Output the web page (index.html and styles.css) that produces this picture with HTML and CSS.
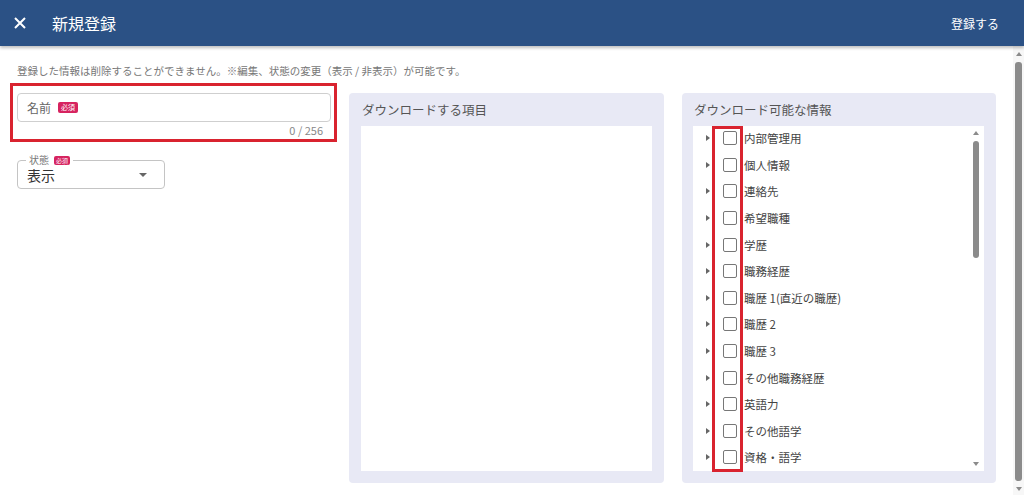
FILE: index.html
```html
<!DOCTYPE html>
<html lang="ja">
<head>
<meta charset="utf-8">
<title>新規登録</title>
<link rel="stylesheet" href="styles.css">
</head>
<body>
<div class="header">
	<svg class="close" width="12" height="12" viewBox="0 0 12 12"><path d="M1 1L11 11M11 1L1 11" stroke="#fff" stroke-width="2"/></svg>
	<span class="title">新規登録</span>
	<a class="submit">登録する</a>
</div>
<div class="page">
	<div class="main">
		<p class="notice">登録した情報は削除することができません。※編集、状態の変更（表示 / 非表示）が可能です。</p>
		<div class="content">
			<div class="form">
				<div class="mark">
					<div class="input">
						<span class="placeholder">名前</span><span class="must">必須</span>
					</div>
					<div class="count">0 / 256</div>
				</div>
				<fieldset class="select">
					<legend>状態<span class="must small">必須</span></legend>
					<span class="value">表示</span>
					<svg width="8" height="4" viewBox="0 0 8 4"><path d="M0 0H8L4 4Z" fill="#666"/></svg>
				</fieldset>
			</div>
			<div class="panel">
				<div class="panelTitle">ダウンロードする項目</div>
				<div class="box"></div>
			</div>
			<div class="panel right">
				<div class="panelTitle">ダウンロード可能な情報</div>
				<div class="box tree">
					<ul class="treeList">
						<li><i></i><b></b>内部管理用</li>
						<li><i></i><b></b>個人情報</li>
						<li><i></i><b></b>連絡先</li>
						<li><i></i><b></b>希望職種</li>
						<li><i></i><b></b>学歴</li>
						<li><i></i><b></b>職務経歴</li>
						<li><i></i><b></b>職歴 1(直近の職歴)</li>
						<li><i></i><b></b>職歴 2</li>
						<li><i></i><b></b>職歴 3</li>
						<li><i></i><b></b>その他職務経歴</li>
						<li><i></i><b></b>英語力</li>
						<li><i></i><b></b>その他語学</li>
						<li><i></i><b></b>資格・語学</li>
					</ul>
					<div class="bar small">
						<span class="up"></span>
						<span class="thumb"></span>
						<span class="down"></span>
					</div>
					<div class="checkMark"></div>
				</div>
			</div>
		</div>
	</div>
	<div class="bar page">
		<span class="up"></span>
		<span class="thumb"></span>
		<span class="down"></span>
	</div>
</div>
</body>
</html>
```
FILE: styles.css
```css
*{
	box-sizing:border-box;
}
body{
	margin:0;
	font-family:"Noto Sans CJK JP","Noto Sans",sans-serif;
	color:#444;
	background:#fff;
	overflow:hidden;
}
.header{
	height:46px;
	background-color:#2b5185;
	box-shadow:0 2px 3px rgba(0,0,0,0.25);
	display:flex;
	align-items:center;
	padding:0 25px 0 14px;
	color:#fff;
	position:relative;
	z-index:1;
}
.header .close{
	margin-right:26px;
}
.header .title{
	font-size:16px;
	flex:1;
}
.header .submit{
	font-size:12px;
}
.page{
	display:flex;
	height:449px;
}
.main{
	flex:1;
	padding:17px 17px 0 17px;
}
.notice{
	margin:0 0 4px 0;
	font-size:10.5px;
	line-height:16px;
	color:#777;
}
.content{
	display:flex;
	gap:18px;
}
.form{
	width:314px;
}
.mark{
	margin:0 -6px 0 -7px;
	border:3px solid #d9232f;
	padding:7px 3px 3px 4px;
}
.input{
	height:29px;
	border:1px solid #cfcfcf;
	border-radius:4px;
	display:flex;
	align-items:center;
	padding-left:9px;
}
.placeholder{
	font-size:12px;
	color:#666;
	margin-right:7px;
}
.must{
	display:inline-block;
	background-color:#d6235f;
	color:#fff;
	font-size:7px;
	line-height:11px;
	padding:0 3px;
	border-radius:2px;
}
.must.small{
	font-size:6px;
	line-height:9px;
	padding:0 2px;
	margin-left:5px;
	vertical-align:1px;
}
.count{
	text-align:right;
	font-size:11px;
	line-height:12px;
	margin-top:2px;
	padding-right:8px;
	color:#888;
}
.select{
	margin:12px 0 0 0;
	width:148px;
	height:35px;
	border:1px solid #c4c4c4;
	border-radius:4px;
	padding:0 17px 0 9px;
	display:flex;
	align-items:flex-start;
	justify-content:space-between;
}
.select legend{
	font-size:10px;
	line-height:12px;
	color:#777;
	padding:0 3px;
	margin-left:-1px;
}
.select .value{
	font-size:14px;
	line-height:18px;
	color:#333;
}
.select svg{
	margin-top:7px;
}
.panel{
	flex:1;
	margin-top:10px;
	height:390px;
	background-color:#e8e9f5;
	border-radius:4px;
	padding:0 12px 12px 12px;
	display:flex;
	flex-direction:column;
}
.panel.right{
	padding:0 12px 13px 11px;
}
.panelTitle{
	font-size:12.5px;
	line-height:33px;
	padding-left:1px;
	color:#555;
}
.box{
	flex:1;
	background:#fff;
}
.tree{
	display:flex;
	position:relative;
}
.treeList{
	flex:1;
	list-style:none;
	margin:-1px 0 0 0;
	padding:0 0 0 13px;
}
.treeList li{
	height:26.6px;
	display:flex;
	align-items:center;
	font-size:11.5px;
	color:#444;
}
.treeList i{
	width:0;
	height:0;
	border-left:4px solid #666;
	border-top:3px solid transparent;
	border-bottom:3px solid transparent;
	margin-right:13px;
}
.treeList b{
	width:14px;
	height:14px;
	border:1.5px solid #777;
	border-radius:2px;
	margin-right:7px;
}
.checkMark{
	position:absolute;
	left:19px;
	top:0;
	width:31px;
	height:346px;
	border:3px solid #d9232f;
}
.bar{
	display:flex;
	flex-direction:column;
	align-items:center;
}
.bar .thumb{
	background-color:#8b8b8b;
	border-radius:3px;
}
.bar .up,.bar .down{
	width:0;
	height:0;
	border-left:3px solid transparent;
	border-right:3px solid transparent;
}
.bar .up{
	border-bottom:4px solid #8b8b8b;
}
.bar .down{
	border-top:4px solid #8b8b8b;
}
.bar.small{
	width:12px;
	padding:5px 0 5px 0;
	margin-right:2px;
}
.bar.small .thumb{
	width:6px;
	height:117px;
	margin:6px 0 auto 0;
}
.bar.page{
	width:11px;
	height:449px;
	padding:6px 0 4px 0;
	background:#f7f7f7;
}
.bar.page .thumb{
	width:7px;
	flex:1;
	margin:6px 0 6px 0;
}
```
